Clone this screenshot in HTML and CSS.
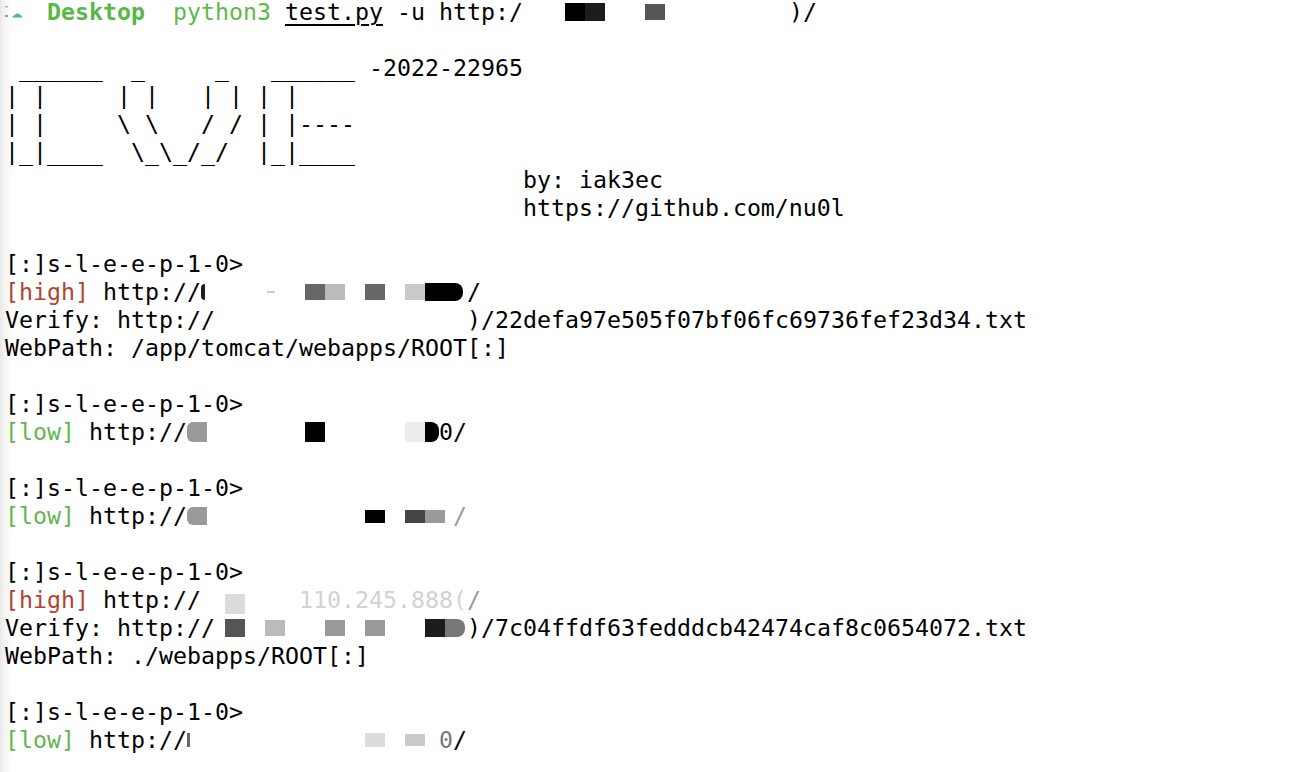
FILE: index.html
```html
<!DOCTYPE html>
<html lang="en">
<head>
<meta charset="utf-8">
<title>Terminal</title>
<link rel="stylesheet" href="styles.css">
</head>
<body>
<div class="term">
<div class="line"><span class="logo"><svg width="42" height="28" viewBox="0 0 42 28"><rect x="0" y="8" width="3" height="1.5" fill="#b5b5b5"/><rect x="0" y="17" width="3" height="2" fill="#9a9a9a"/><path d="M7 19.5 C9 17 11.5 15 13.5 15.5 L17 18 L17 19.5 Z" fill="#4fb0c0"/></svg></span><b class="dir">Desktop</b>  <span class="cmd">python3</span> <span class="file">test.py</span> -u http:/<span class="mask" style="width:266px"><span class="blk k0" style="margin-left:42px;width:20px;height:18px"></span><span class="blk k1" style="width:20px;height:18px"></span><span class="blk k3" style="margin-left:40px;width:20px;height:16px"></span></span>)/</div>
<div class="line"></div>
<div class="line"> ______  _     _   ______ -2022-22965</div>
<div class="line">| |     | |   | | | |</div>
<div class="line">| |     \ \   / / | |----</div>
<div class="line">|_|____  \_\_/_/  |_|____</div>
<div class="line">                                     by: iak3ec</div>
<div class="line">                                     https://github.com/nu0l</div>
<div class="line"></div>
<div class="line">[:]s-l-e-e-p-1-0&gt;</div>
<div class="line"><span class="hi">[high]</span> http://<span class="mask" style="width:266px"><span class="blk k1 rl" style="width:4px;height:16px"></span><span class="blk k8" style="margin-left:62px;width:8px;height:2px"></span><span class="blk k4" style="margin-left:30px;width:20px;height:16px"></span><span class="blk k7" style="width:20px;height:16px"></span><span class="blk k4" style="margin-left:20px;width:20px;height:16px"></span><span class="blk k8" style="margin-left:20px;width:20px;height:16px"></span><span class="blk k0 rr" style="width:38px;height:18px"></span></span>/</div>
<div class="line">Verify: http://<span class="mask" style="width:252px"></span>)/22defa97e505f07bf06fc69736fef23d34.txt</div>
<div class="line">WebPath: /app/tomcat/webapps/ROOT[:]</div>
<div class="line"></div>
<div class="line">[:]s-l-e-e-p-1-0&gt;</div>
<div class="line"><span class="lo">[low]</span> http://<span class="mask" style="width:252px"><span class="blk k6 rl" style="width:20px;height:20px"></span><span class="blk k0" style="margin-left:98px;width:20px;height:20px"></span><span class="blk k10" style="margin-left:80px;width:20px;height:20px"></span><span class="blk k0 rr" style="width:14px;height:20px"></span></span>0/</div>
<div class="line"></div>
<div class="line">[:]s-l-e-e-p-1-0&gt;</div>
<div class="line"><span class="lo">[low]</span> http://<span class="mask" style="width:266px"><span class="blk k6 rl" style="width:20px;height:18px"></span><span class="blk k0" style="margin-left:158px;width:20px;height:13px"></span><span class="blk k2" style="margin-left:20px;width:20px;height:13px"></span><span class="blk k6" style="width:20px;height:13px"></span></span><span class="faint">/</span></div>
<div class="line"></div>
<div class="line">[:]s-l-e-e-p-1-0&gt;</div>
<div class="line"><span class="hi">[high]</span> http://<span class="mask" style="width:98px"><span class="blk k9 low" style="margin-left:24px;width:20px;height:20px"></span></span><span class="ghost">110.245.888(</span><span class="faint">/</span></div>
<div class="line">Verify: http://<span class="mask" style="width:252px"><span class="blk k3" style="margin-left:10px;width:20px;height:18px"></span><span class="blk k7" style="margin-left:20px;width:20px;height:16px"></span><span class="blk k6" style="margin-left:40px;width:20px;height:16px"></span><span class="blk k6" style="margin-left:20px;width:20px;height:16px"></span><span class="blk k1" style="margin-left:40px;width:20px;height:18px"></span><span class="blk k5 rr" style="width:20px;height:18px"></span></span>)/7c04ffdf63fedddcb42474caf8c0654072.txt</div>
<div class="line">WebPath: ./webapps/ROOT[:]</div>
<div class="line"></div>
<div class="line">[:]s-l-e-e-p-1-0&gt;</div>
<div class="line"><span class="lo">[low]</span> http://<span class="mask" style="width:252px"><span class="blk k4" style="width:3px;height:14px"></span><span class="blk k9" style="margin-left:175px;width:20px;height:14px"></span><span class="blk k8" style="margin-left:20px;width:20px;height:12px"></span></span><span class="dim">0</span>/</div>
</div>
</body>
</html>
```
FILE: styles.css
```css
html, body {
  margin: 0;
  padding: 0;
}

body {
  width: 1298px;
  height: 772px;
  overflow: hidden;
  background: linear-gradient(90deg, #e8e8e8 0, #f5f5f5 5px, #ffffff 13px);
  font-family: "DejaVu Sans Mono", "Liberation Mono", monospace;
  font-size: 23.25px;
  color: #000;
}

.term {
  margin-top: -2px;
  padding-left: 5px;
}

.line {
  height: 28px;
  line-height: 28px;
  white-space: pre;
}

.logo {
  display: inline-block;
  width: 42px;
  height: 28px;
  vertical-align: top;
}

.logo svg {
  display: block;
}

.dir {
  font-weight: bold;
  color: #57b846;
}

.cmd {
  color: #5cba4a;
}

.file {
  text-decoration: underline;
  text-decoration-thickness: 2px;
  text-underline-offset: 4px;
}

.hi {
  color: #b2432f;
}

.lo {
  color: #5fb64f;
}

.mask {
  display: inline-flex;
  align-items: center;
  height: 28px;
  vertical-align: top;
}

.blk {
  flex: none;
  display: block;
}

.rl { border-radius: 6px 0 0 6px; }
.rr { border-radius: 0 8px 8px 0; }
.low { align-self: flex-end; }

.k0 { background: #000; }
.k1 { background: #1c1c1c; }
.k2 { background: #444; }
.k3 { background: #555; }
.k4 { background: #676767; }
.k5 { background: #777; }
.k6 { background: #9a9a9a; }
.k7 { background: #bbb; }
.k8 { background: #cacaca; }
.k9 { background: #dcdcdc; }
.k10 { background: #ededed; }

.faint { color: #999; }
.ghost { color: #d2d2d2; }
.dim { color: #777; }
```
